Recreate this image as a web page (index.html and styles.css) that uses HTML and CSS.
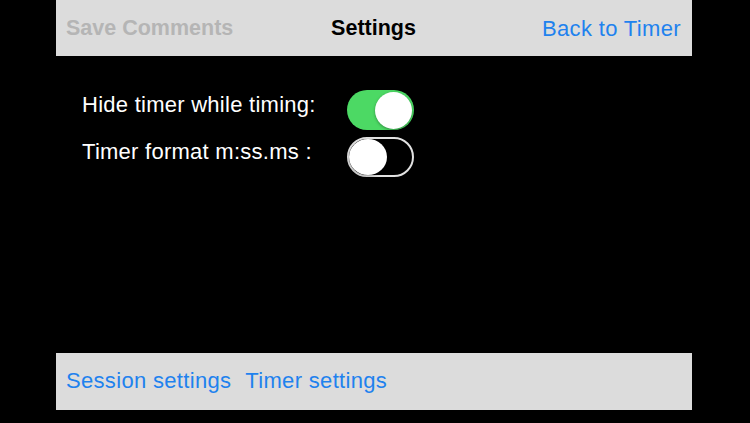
FILE: index.html
```html
<!DOCTYPE html>
<html>
<head>
<meta charset="utf-8">
<link rel="stylesheet" href="styles.css">
</head>
<body>
<div class="screen">
  <header class="navbar">
    <span class="nav-left">Save Comments</span>
    <span class="nav-title">Settings</span>
    <span class="nav-right">Back to Timer</span>
  </header>
  <main class="settings">
    <div class="label">Hide timer while timing:</div>
    <div class="switch on"><span class="knob"></span></div>
    <div class="label">Timer format m:ss.ms :</div>
    <div class="switch off"><span class="knob"></span></div>
  </main>
  <footer class="tabbar">
    <span class="tab">Session settings</span>
    <span class="tab">Timer settings</span>
  </footer>
</div>
</body>
</html>
```
FILE: styles.css
```css
html, body {
  margin: 0;
  padding: 0;
  background: #000;
}
body {
  font-family: "Liberation Sans", Arial, sans-serif;
}
.screen {
  width: 750px;
  height: 423px;
  display: flex;
  flex-direction: column;
  background: #000;
}
.navbar {
  margin-left: 56px;
  width: 636px;
  height: 56px;
  box-sizing: border-box;
  background: #dcdcdc;
  display: grid;
  grid-template-columns: 1fr auto 1fr;
  align-items: center;
  padding: 1px 11px 0 10px;
  font-size: 22px;
}
.nav-left {
  color: #b5b5b5;
  font-weight: bold;
  font-size: 21.5px;
  justify-self: start;
}
.nav-title {
  color: #000;
  font-weight: bold;
  font-size: 21.5px;
}
.nav-right {
  color: #1f82ee;
  letter-spacing: 0.35px;
  justify-self: end;
}
.settings {
  display: grid;
  grid-template-columns: 265px 67px;
  row-gap: 7px;
  margin: 34px 0 0 82px;
  align-items: start;
}
.label {
  color: #fff;
  font-size: 22px;
  letter-spacing: 0.26px;
  line-height: 26px;
  padding-top: 2px;
  white-space: nowrap;
}
.switch {
  width: 67px;
  height: 40px;
  border-radius: 20px;
  box-sizing: border-box;
  display: flex;
  align-items: center;
}
.switch.on {
  background: #4cd964;
  justify-content: flex-end;
  padding: 0 2px;
}
.switch.off {
  background: #000;
  border: 2px solid #e2e2e2;
  justify-content: flex-start;
}
.knob {
  display: block;
  width: 37px;
  height: 37px;
  border-radius: 50%;
  background: #fff;
  box-shadow: 0 1px 3px rgba(0,0,0,0.35);
}
.switch.off .knob {
  width: 38px;
  height: 36px;
  border-radius: 50%;
}
.tabbar {
  margin: auto 0 13px 56px;
  width: 636px;
  height: 57px;
  box-sizing: border-box;
  background: #dcdcdc;
  display: flex;
  align-items: center;
  gap: 14px;
  padding: 0 10px 2px 10px;
}
.tab {
  color: #1f82ee;
  font-size: 22px;
  letter-spacing: 0.32px;
}
```
